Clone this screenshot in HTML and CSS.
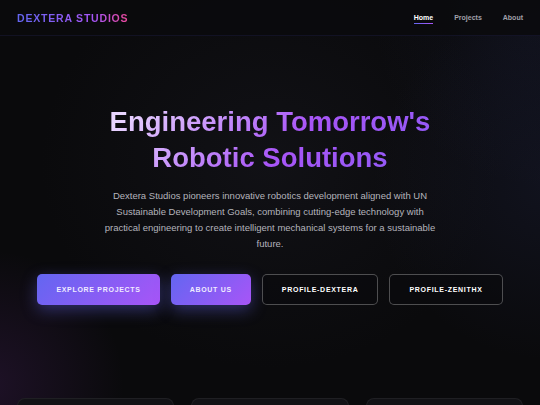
FILE: index.html
```html
<!DOCTYPE html>
<html>
    <head>
        <meta http-equiv="Content-Type" content="text/html; charset=utf-8">
        <title>Dextera Studios</title>
        <link rel="stylesheet" href="styles.css">
    </head>
    <body>
        <header class="site-header">
            <div class="logo">DEXTERA STUDIOS</div>
            <nav class="nav">
                <a href="#" class="nav-link active">Home</a>
                <a href="#" class="nav-link">Projects</a>
                <a href="#" class="nav-link">About</a>
            </nav>
        </header>

        <section class="hero">
            <h1 class="hero-title">Engineering Tomorrow's Robotic Solutions</h1>
            <p class="hero-text">
                Dextera Studios pioneers innovative robotics development aligned with UN
                Sustainable Development Goals, combining cutting-edge technology with
                practical engineering to create intelligent mechanical systems for a sustainable
                future.
            </p>
            <div class="actions">
                <a href="#" class="btn btn-fill">Explore Projects</a>
                <a href="#" class="btn btn-fill">About Us</a>
                <a href="#" class="btn btn-line">Profile-Dextera</a>
                <a href="#" class="btn btn-line">Profile-ZenithX</a>
            </div>
        </section>

        <section class="cards">
            <div class="card"></div>
            <div class="card"></div>
            <div class="card"></div>
        </section>
    </body>
</html>
```

FILE: styles.css
```css
* {
    box-sizing: border-box;
}

html, body {
    margin: 0;
    height: 100%;
}

body {
    font-family: "Liberation Sans", Arial, sans-serif;
    color: #e4e4e7;
    background-color: #0a0a0c;
    background-image:
        radial-gradient(circle at -2% 95%, rgba(120, 50, 160, 0.18), transparent 20%),
        radial-gradient(circle at 102% 45%, rgba(60, 70, 140, 0.14), transparent 30%),
        radial-gradient(circle at 100% 5%, rgba(60, 70, 140, 0.12), transparent 25%),
        radial-gradient(ellipse at 50% 40%, rgba(30, 30, 40, 0.35), transparent 60%);
    overflow: hidden;
}

a {
    text-decoration: none;
}

.site-header {
    height: 36px;
    display: flex;
    align-items: center;
    justify-content: space-between;
    padding: 0 17px;
    background: rgba(10, 10, 13, 0.85);
    border-bottom: 1px solid rgba(99, 102, 241, 0.1);
}

.logo {
    font-size: 10.5px;
    font-weight: bold;
    letter-spacing: 0.8px;
    background: linear-gradient(90deg, #6366f1, #a855f7 70%, #ec4899);
    -webkit-background-clip: text;
    background-clip: text;
    color: transparent;
}

.nav {
    display: flex;
    gap: 21px;
}

.nav-link {
    position: relative;
    font-size: 7px;
    font-weight: bold;
    color: #a1a1aa;
    padding: 4px 0;
}

.nav-link.active {
    color: #fff;
}

.nav-link.active::after {
    content: "";
    position: absolute;
    left: 0;
    right: 0;
    bottom: 1px;
    height: 1.5px;
    background: linear-gradient(90deg, #6366f1, #a855f7);
}

.hero {
    display: flex;
    flex-direction: column;
    align-items: center;
    text-align: center;
    padding-top: 68px;
}

.hero-title {
    margin: 0;
    font-size: 27.5px;
    line-height: 1.3;
    font-weight: bold;
    max-width: 360px;
    background: linear-gradient(135deg, #e9d5ff 10%, #a855f7 55%, #8b5cf6);
    -webkit-background-clip: text;
    background-clip: text;
    color: transparent;
}

.hero-text {
    margin: 12.5px 0 0;
    max-width: 336px;
    font-size: 9.5px;
    line-height: 1.7;
    color: #b4b4bc;
}

.actions {
    display: flex;
    gap: 11px;
    margin-top: 21.5px;
}

.btn {
    height: 30.5px;
    display: flex;
    align-items: center;
    padding: 0 19px;
    border-radius: 5px;
    font-size: 7px;
    font-weight: bold;
    letter-spacing: 0.7px;
    text-transform: uppercase;
    color: #fff;
}

.btn-fill {
    background: linear-gradient(135deg, #6366f1, #a855f7);
    box-shadow: 0 5px 16px rgba(99, 102, 241, 0.4);
    color: #f0ecff;
}

.btn-line {
    border: 1px solid rgba(255, 255, 255, 0.28);
    background: rgba(10, 10, 14, 0.6);
}

.cards {
    display: grid;
    grid-template-columns: repeat(3, 1fr);
    gap: 17px;
    padding: 0 17px;
    margin-top: 93px;
}

.card {
    height: 120px;
    border-radius: 8px;
    background: #121216;
    border: 1px solid rgba(255, 255, 255, 0.06);
}
```
